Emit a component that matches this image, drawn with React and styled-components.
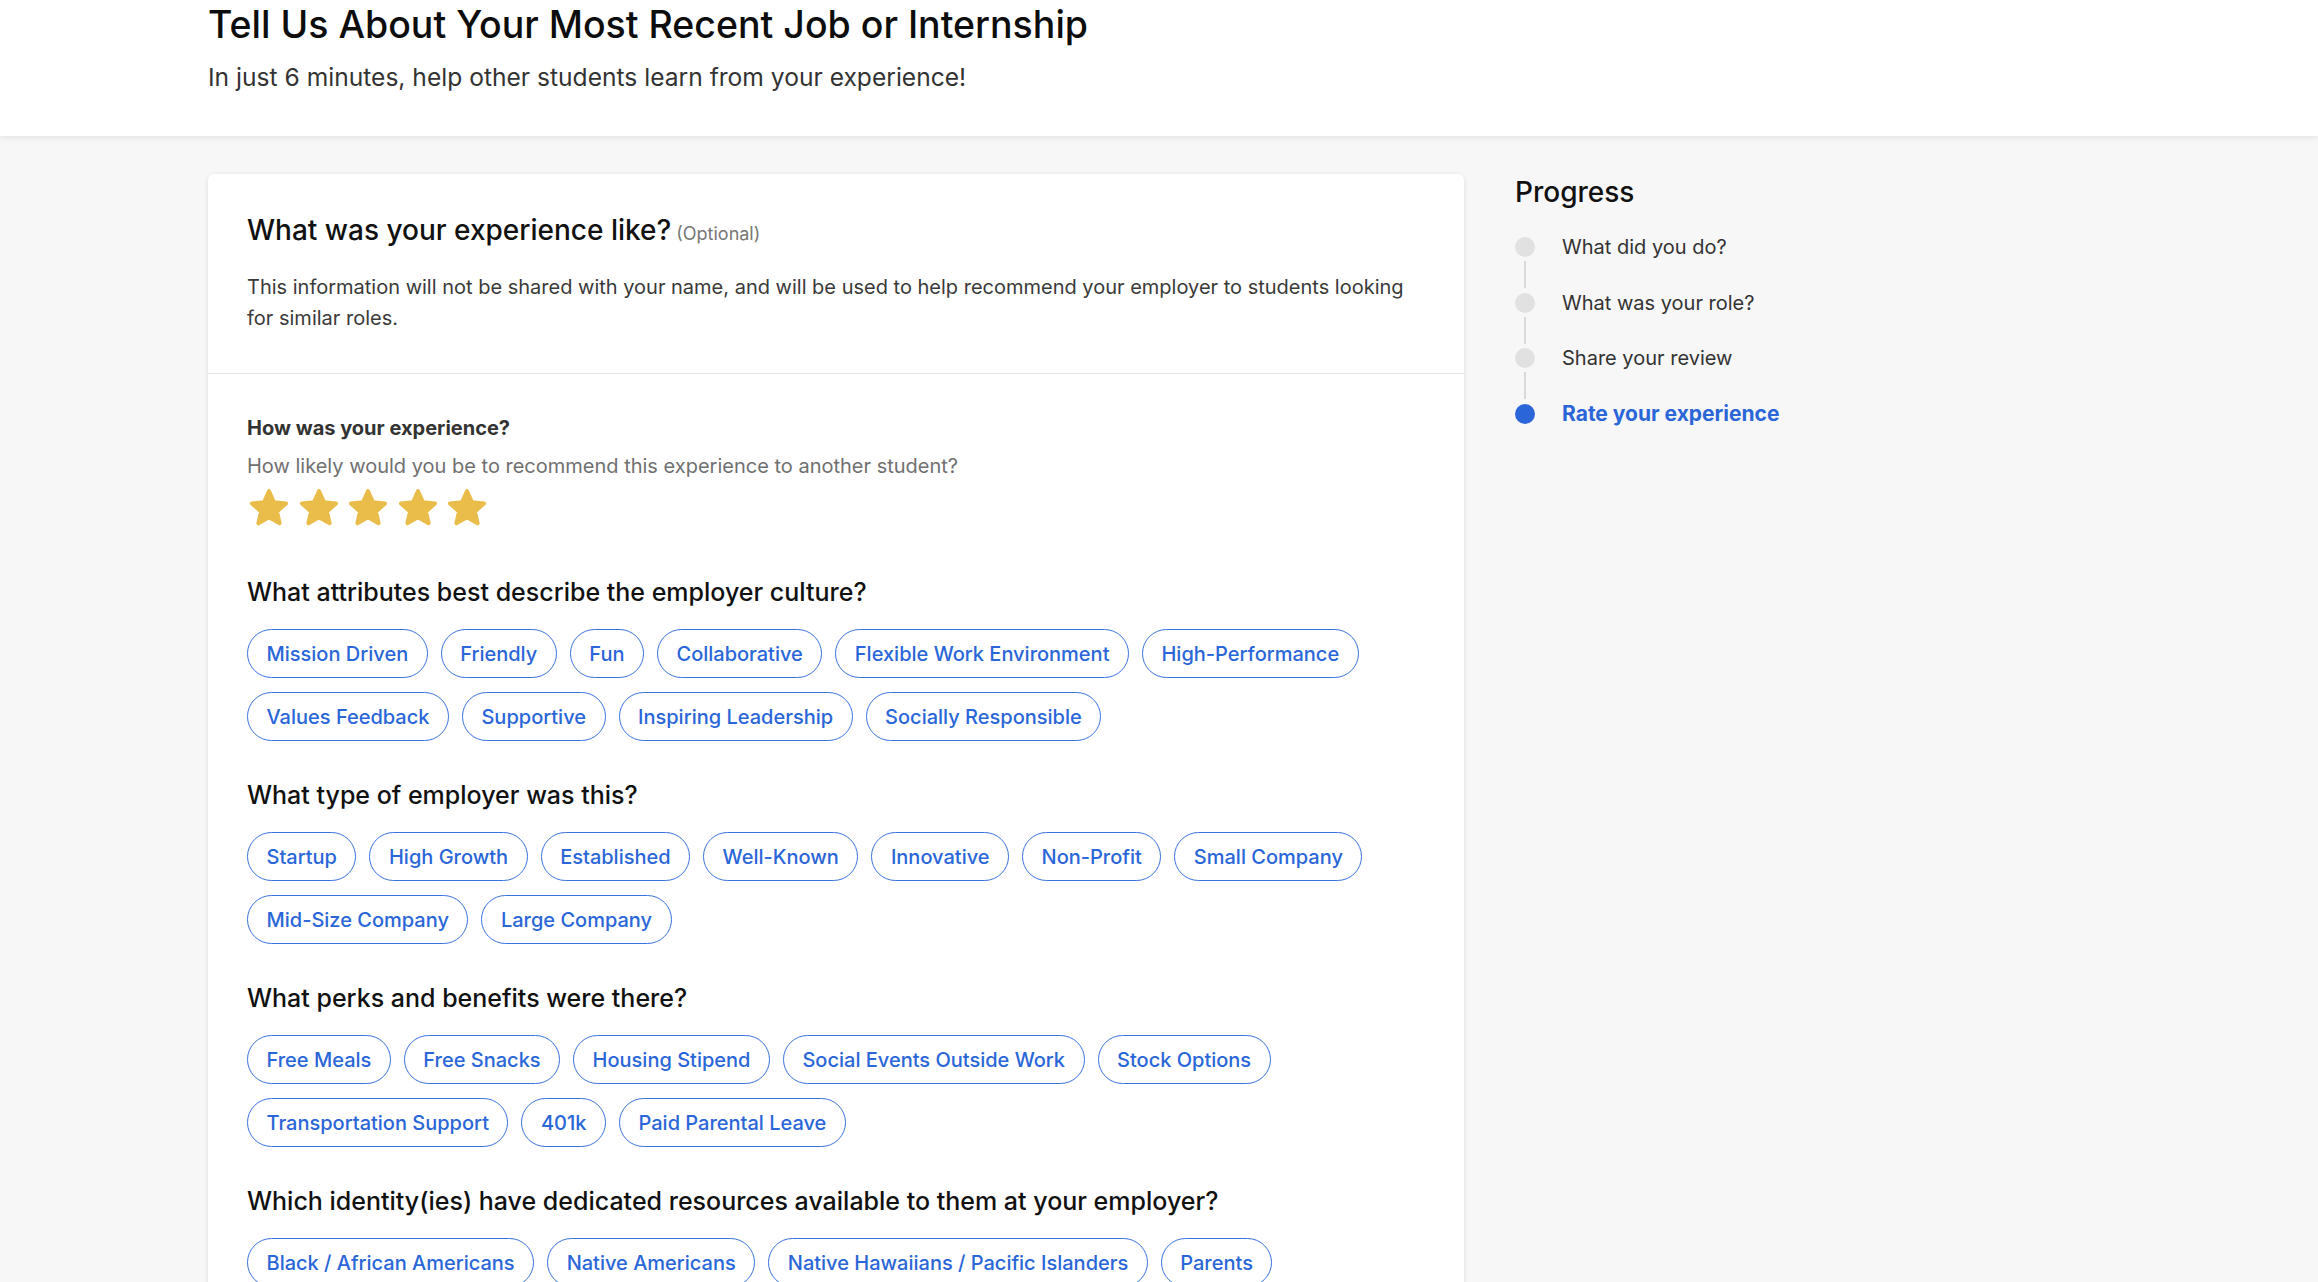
import React from 'react';
import styled, { createGlobalStyle } from 'styled-components';

const GlobalStyle = createGlobalStyle`
  html, body {
    margin: 0;
    padding: 0;
    background: #f7f7f7;
    font-family: Inter, "Noto Sans", "Liberation Sans", sans-serif;
    color: #111;
  }
  * { box-sizing: border-box; }
`;

// Data
const culture = [
  'Mission Driven', 'Friendly', 'Fun', 'Collaborative', 'Flexible Work Environment',
  'High-Performance', 'Values Feedback', 'Supportive', 'Inspiring Leadership', 'Socially Responsible',
];
const employerType = [
  'Startup', 'High Growth', 'Established', 'Well-Known', 'Innovative', 'Non-Profit',
  'Small Company', 'Mid-Size Company', 'Large Company',
];
const perks = [
  'Free Meals', 'Free Snacks', 'Housing Stipend', 'Social Events Outside Work', 'Stock Options',
  'Transportation Support', '401k', 'Paid Parental Leave',
];
const identities = [
  'Black / African Americans', 'Native Americans', 'Native Hawaiians / Pacific Islanders', 'Parents',
  'People with Disabilities', 'Veterans', 'LGBTQ+', 'Women',
];
const steps = [
  { label: 'What did you do?' },
  { label: 'What was your role?' },
  { label: 'Share your review' },
  { label: 'Rate your experience', active: true },
];

// Header
const Header = styled.header`
  background: #fff;
  height: 136px;
  padding: 3px 0 0 208px;
  box-shadow: 0 2px 6px rgba(0, 0, 0, 0.08);
  position: relative;
  z-index: 1;
`;

const Title = styled.h1`
  margin: 0;
  font-size: 37.5px;
  line-height: 44px;
  font-weight: 500;
  color: #0d0d0d;
`;

const Subtitle = styled.p`
  margin: 14px 0 0;
  font-size: 24.6px;
  line-height: 32px;
  color: #333;
`;

// Main layout
const Main = styled.main`
  display: flex;
  align-items: flex-start;
  gap: 51px;
  padding: 38px 0 0 208px;
`;

const Card = styled.section`
  width: 1256px;
  flex-shrink: 0;
  background: #fff;
  border-radius: 6px;
  box-shadow: 0 1px 5px rgba(0, 0, 0, 0.1);
`;

const CardTop = styled.div`
  padding: 39px 39px 39px;
  border-bottom: 1px solid #e6e6e6;
`;

const CardHeading = styled.h2`
  margin: 0;
  font-size: 28px;
  line-height: 34px;
  font-weight: 500;
  color: #111;
`;

const Optional = styled.span`
  font-size: 18px;
  font-weight: 400;
  color: #777;
  margin-left: 5px;
`;

const Description = styled.p`
  margin: 21px 0 0;
  font-size: 20px;
  line-height: 31px;
  color: #3a3a3a;
  max-width: 1170px;
`;

const CardBody = styled.div`
  padding: 40px 39px 60px;
`;

const Question = styled.h3`
  margin: 0;
  font-size: 20px;
  line-height: 28px;
  font-weight: 700;
  color: #333;
`;

const Hint = styled.p`
  margin: 10px 0 0;
  font-size: 20px;
  line-height: 28px;
  color: #707070;
`;

const Stars = styled.div`
  display: flex;
  gap: 9.5px;
  margin: 8px 0 0 2px;
`;

const Section = styled.div`
  margin-top: ${p => p.$first ? '51px' : '39px'};
`;

const SectionTitle = styled.h3`
  margin: 0;
  font-size: 25px;
  line-height: 30px;
  font-weight: 500;
  color: #111;
`;

const ChipRow = styled.div`
  display: flex;
  flex-wrap: wrap;
  gap: 14px 13px;
  margin-top: 22px;
`;

const Chip = styled.button`
  height: 49px;
  padding: 0 18.5px;
  border: 1px solid #3a72dc;
  border-radius: 999px;
  background: #fff;
  color: #2a66d8;
  font-family: inherit;
  font-size: 20px;
  font-weight: 500;
  cursor: pointer;
  white-space: nowrap;
`;

// Sidebar
const Sidebar = styled.aside`
  padding-top: 1px;
`;

const SideTitle = styled.h2`
  margin: 0;
  font-size: 28px;
  line-height: 34px;
  font-weight: 500;
  color: #111;
`;

const StepList = styled.div`
  display: flex;
  flex-direction: column;
  margin-top: 28px;
`;

const Step = styled.div`
  display: flex;
  align-items: center;
  gap: 27px;
  height: 20px;
  font-size: ${p => p.$active ? '21px' : '20px'};
  color: ${p => p.$active ? '#2b66d9' : '#333'};
  font-weight: ${p => p.$active ? 700 : 400};
`;

const Dot = styled.span`
  width: 20px;
  height: 20px;
  border-radius: 50%;
  flex-shrink: 0;
  background: ${p => p.$active ? '#2b66d9' : '#e1e1e1'};
`;

const Connector = styled.span`
  width: 2px;
  height: 27px;
  margin: 4px 0 4.5px 9px;
  background: #d9d9d9;
`;

const Star = () => (
  <svg width="40" height="38" viewBox="0 0 40 38">
    <path
      d="M20 3 L25 14.2 L37 15.4 L28 23.5 L30.6 35.3 L20 29.2 L9.4 35.3 L12 23.5 L3 15.4 L15 14.2 Z"
      fill="#eabd4b"
      stroke="#eabd4b"
      strokeWidth="4"
      strokeLinejoin="round"
    />
  </svg>
);

const ChipSection = ({ title, items, first }) => (
  <Section $first={first}>
    <SectionTitle>{title}</SectionTitle>
    <ChipRow>
      {items.map(item => <Chip key={item}>{item}</Chip>)}
    </ChipRow>
  </Section>
);

export default function App() {
  return (
    <>
      <GlobalStyle />
      <Header>
        <Title>Tell Us About Your Most Recent Job or Internship</Title>
        <Subtitle>In just 6 minutes, help other students learn from your experience!</Subtitle>
      </Header>
      <Main>
        <Card>
          <CardTop>
            <CardHeading>
              What was your experience like?<Optional>(Optional)</Optional>
            </CardHeading>
            <Description>
              This information will not be shared with your name, and will be used to help recommend your employer to students looking for similar roles.
            </Description>
          </CardTop>
          <CardBody>
            <Question>How was your experience?</Question>
            <Hint>How likely would you be to recommend this experience to another student?</Hint>
            <Stars>
              {[0, 1, 2, 3, 4].map(i => <Star key={i} />)}
            </Stars>
            <ChipSection first title="What attributes best describe the employer culture?" items={culture} />
            <ChipSection title="What type of employer was this?" items={employerType} />
            <ChipSection title="What perks and benefits were there?" items={perks} />
            <ChipSection title="Which identity(ies) have dedicated resources available to them at your employer?" items={identities} />
          </CardBody>
        </Card>
        <Sidebar>
          <SideTitle>Progress</SideTitle>
          <StepList>
            {steps.map((s, i) => (
              <React.Fragment key={s.label}>
                {i > 0 && <Connector />}
                <Step $active={s.active}>
                  <Dot $active={s.active} />
                  {s.label}
                </Step>
              </React.Fragment>
            ))}
          </StepList>
        </Sidebar>
      </Main>
    </>
  );
}
